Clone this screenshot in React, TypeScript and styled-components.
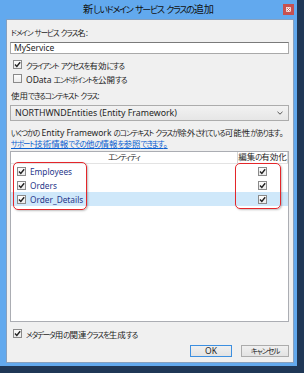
import React from "react";
import styled, { createGlobalStyle } from "styled-components";

const Global = createGlobalStyle`
  html, body { margin: 0; padding: 0; }
  body {
    width: 304px; height: 373px; overflow: hidden;
    background: #1f3756;
    font-family: "Noto Sans", "Noto Sans CJK JP", sans-serif;
    font-size: 8.5px;
    color: #1e1e1e;
    font-feature-settings: "palt";
  }
`;

/* Meiryo UI draws kana narrower than kanji: emulate it on kana runs */
const Kana = styled.span`
  font-size: 0.88em;
  letter-spacing: -0.14em;
`;

const Jp = ({ children }: { children: string }) => {
  const parts = children.split(/([\u3040-\u30FF]+)/).filter(Boolean);
  return (
    <>
      {parts.map((p, i) =>
        /^[\u3040-\u30FF]+$/.test(p) ? <Kana key={i}>{p}</Kana> : <React.Fragment key={i}>{p}</React.Fragment>
      )}
    </>
  );
};

const Window = styled.div`
  width: 297px;
  height: 366px;
  box-sizing: border-box;
  background: #62a9ee;
  padding: 0 3px 3px 6px;
  display: flex;
  flex-direction: column;
`;

const TitleBar = styled.div`
  height: 19px;
  display: grid;
  grid-template-columns: 1fr auto 1fr;
  align-items: center;
`;

const Title = styled.div`
  grid-column: 2;
  font-size: 10.2px;
  line-height: 19px;
  color: #111;
  white-space: nowrap;
  margin-left: -3px;
`;

const CloseBtn = styled.div`
  grid-column: 3;
  justify-self: end;
  align-self: start;
  margin-top: 4px;
  width: 11px;
  height: 11px;
  background: #c7504f;
  display: flex;
  align-items: center;
  justify-content: center;
`;

const Client = styled.div`
  flex: 1;
  background: #f0f0f0;
  border: 1px solid #86a0bf;
  padding: 0 4px 0 3px;
  display: flex;
  flex-direction: column;
`;

const Label = styled.div<{ $mt: number }>`
  margin-top: ${(p) => p.$mt}px;
  padding-left: 1px;
  line-height: 11px;
  height: 11px;
  white-space: nowrap;
`;

const TextBox = styled.div`
  margin-top: 4px;
  height: 12px;
  box-sizing: border-box;
  border: 1px solid #a9a9a9;
  border-top-color: #7a7a7a;
  background: #fff;
  padding-left: 3px;
  line-height: 10px;
`;

const CheckRow = styled.div<{ $mt: number }>`
  margin-top: ${(p) => p.$mt}px;
  margin-left: 3px;
  height: 11px;
  display: flex;
  align-items: center;
  gap: 4px;
  white-space: nowrap;
`;

const Box = styled.div`
  width: 9px;
  height: 9px;
  box-sizing: border-box;
  border: 1px solid #8a8a8a;
  background: linear-gradient(#fdfdfd, #ececec);
  display: flex;
  align-items: center;
  justify-content: center;
  flex: none;
`;

const Combo = styled.div`
  margin-top: 4px;
  height: 16px;
  box-sizing: border-box;
  border: 1px solid #acacac;
  background: linear-gradient(#f2f2f2, #e6e6e6);
  display: flex;
  align-items: center;
  justify-content: space-between;
  padding: 0 5px 0 4px;
  font-size: 8.8px;
`;

const Link = styled.div`
  height: 11px;
  line-height: 11px;
  padding-left: 1px;
  color: #0a5fd0;
  text-decoration: underline;
  white-space: nowrap;
`;

const ListBox = styled.div`
  position: relative;
  margin-top: 2px;
  height: 171px;
  box-sizing: border-box;
  border: 1px solid #abadb3;
  background: #fff;
  display: flex;
  flex-direction: column;
`;

const Header = styled.div`
  display: grid;
  grid-template-columns: 1fr 51px;
  height: 11px;
  border-bottom: 1px solid #e3e3e3;
  line-height: 10px;
`;

const HeadCell = styled.div<{ $sep?: boolean }>`
  text-align: center;
  white-space: nowrap;
  ${(p) => (p.$sep ? "border-left: 1px solid #d6d6d6; border-right: 1px solid #d6d6d6;" : "")}
`;

const Row = styled.div<{ $sel?: boolean }>`
  display: grid;
  grid-template-columns: 1fr 51px;
  height: 14px;
  align-items: center;
  background: ${(p) => (p.$sel ? "#cfe8fa" : "transparent")};
  &:first-of-type { margin-top: 1px; }
`;

const NameCell = styled.div`
  display: flex;
  align-items: center;
  gap: 4px;
  padding-left: 6px;
  color: #27378a;
  font-size: 8.3px;
`;

const CheckCell = styled.div`
  display: flex;
  justify-content: center;
`;

const Mark = styled.div<{ $l: number; $t: number; $w: number; $h: number }>`
  position: absolute;
  left: ${(p) => p.$l}px;
  top: ${(p) => p.$t}px;
  width: ${(p) => p.$w}px;
  height: ${(p) => p.$h}px;
  box-sizing: border-box;
  border: 1.5px solid #e4262a;
  border-radius: 5px;
  box-shadow: 1px 1px 2px rgba(0, 0, 0, 0.25);
  pointer-events: none;
`;

const Buttons = styled.div`
  margin-top: 6px;
  display: flex;
  justify-content: flex-end;
  gap: 9px;
`;

const Button = styled.div<{ $w: number; $default?: boolean }>`
  width: ${(p) => p.$w}px;
  height: 12px;
  box-sizing: border-box;
  border: 1px solid ${(p) => (p.$default ? "#3c8fe0" : "#acacac")};
  background: linear-gradient(#f0f0f0, #e3e3e3);
  display: flex;
  align-items: center;
  justify-content: center;
  line-height: 10px;
`;

const Check = () => (
  <svg width="7" height="7" viewBox="0 0 7 7">
    <path d="M1 3.6 L2.8 5.4 L6.2 1.2" fill="none" stroke="#222" strokeWidth="1.4" />
  </svg>
);

const CheckBox = ({ checked }: { checked?: boolean }) => <Box>{checked && <Check />}</Box>;

const rows = [
  { name: "Employees" },
  { name: "Orders" },
  { name: "Order_Details", sel: true },
];

export default function App() {
  return (
    <>
      <Global />
      <Window>
        <TitleBar>
          <Title>
            <Jp>新しいドメイン サービス クラスの追加</Jp>
          </Title>
          <CloseBtn>
            <svg width="5" height="5" viewBox="0 0 5 5">
              <rect x="0.5" y="0.5" width="4" height="4" fill="#fff" stroke="#fff" strokeWidth="0.5" />
              <path d="M1 1 L4 4 M4 1 L1 4" stroke="#c7504f" strokeWidth="0.8" />
            </svg>
          </CloseBtn>
        </TitleBar>
        <Client>
          <Label $mt={7}>
            <Jp>ドメイン サービス クラス名:</Jp>
          </Label>
          <TextBox>MyService</TextBox>
          <CheckRow $mt={5}>
            <CheckBox checked />
            <span>
              <Jp>クライアント アクセスを有効にする</Jp>
            </span>
          </CheckRow>
          <CheckRow $mt={3}>
            <CheckBox />
            <span>
              <Jp>OData エンドポイントを公開する</Jp>
            </span>
          </CheckRow>
          <Label $mt={6}>
            <Jp>使用できるコンテキスト クラス:</Jp>
          </Label>
          <Combo>
            <span>NORTHWNDEntities (Entity Framework)</span>
            <svg width="6" height="4" viewBox="0 0 6 4">
              <path d="M0.5 0.8 L3 3.2 L5.5 0.8" fill="none" stroke="#555" strokeWidth="1" />
            </svg>
          </Combo>
          <Label $mt={6}>
            <Jp>いくつかの Entity Framework のコンテキスト クラスが除外されている可能性があります。</Jp>
          </Label>
          <Link>
            <Jp>サポート技術情報でその他の情報を参照できます。</Jp>
          </Link>
          <ListBox>
            <Header>
              <HeadCell>
                <Jp>エンティティ</Jp>
              </HeadCell>
              <HeadCell $sep>
                <Jp>編集の有効化</Jp>
              </HeadCell>
            </Header>
            {rows.map((r) => (
              <Row key={r.name} $sel={r.sel}>
                <NameCell>
                  <CheckBox checked />
                  <span>{r.name}</span>
                </NameCell>
                <CheckCell>
                  <CheckBox checked />
                </CheckCell>
              </Row>
            ))}
            <Mark $l={2} $t={10} $w={74} $h={48} />
            <Mark $l={224} $t={11} $w={46} $h={46} />
          </ListBox>
          <CheckRow $mt={6}>
            <CheckBox checked />
            <span>
              <Jp>メタデータ用の関連クラスを生成する</Jp>
            </span>
          </CheckRow>
          <Buttons>
            <Button $w={42} $default>OK</Button>
            <Button $w={48}>
              <Jp>キャンセル</Jp>
            </Button>
          </Buttons>
        </Client>
      </Window>
    </>
  );
}
